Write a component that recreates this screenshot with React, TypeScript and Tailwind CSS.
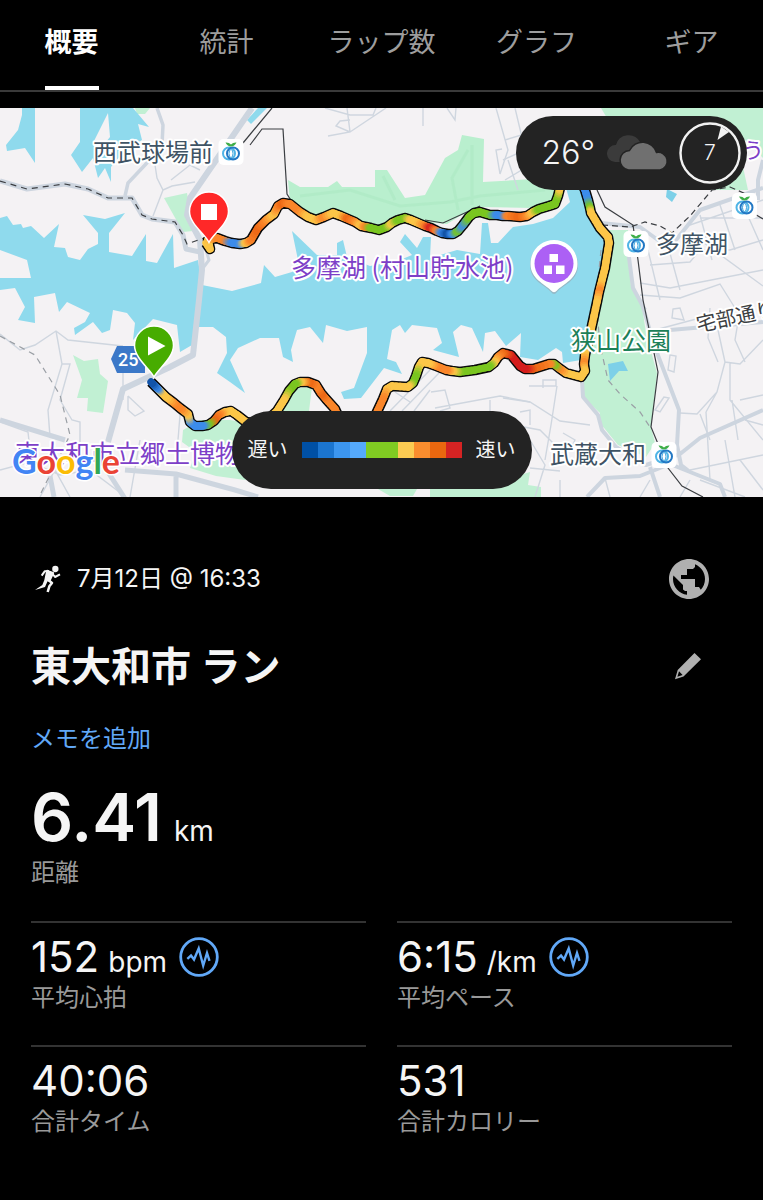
import { type ReactNode } from "react";

type RGB = [number, number, number];

const NAVY: RGB = [12, 76, 160];
const BLUE: RGB = [60, 140, 235];
const GREEN: RGB = [122, 198, 32];
const YELLOW: RGB = [252, 198, 72];
const ORANGE: RGB = [250, 134, 42];
const DEEP: RGB = [236, 102, 20];
const RED: RGB = [212, 28, 28];

type RoutePoint = [number, number, RGB];

const ROUTE: RoutePoint[] = [
  [206, 243, YELLOW], [210, 249, YELLOW], [208, 240, YELLOW], [217, 238, ORANGE], [225, 241, ORANGE],
  [232, 243, BLUE], [240, 244, BLUE], [246, 243, YELLOW], [251, 240, ORANGE], [258, 228, DEEP],
  [266, 220, ORANGE], [274, 214, YELLOW], [278, 206, ORANGE], [283, 203, DEEP], [290, 204, ORANGE],
  [300, 212, ORANGE], [308, 217, YELLOW], [316, 220, YELLOW], [324, 217, ORANGE], [333, 213, YELLOW],
  [341, 216, YELLOW], [348, 219, DEEP], [355, 222, ORANGE], [361, 226, YELLOW], [366, 227, ORANGE],
  [371, 228, GREEN], [379, 230, GREEN], [387, 227, GREEN], [392, 223, YELLOW], [398, 220, GREEN],
  [405, 218, GREEN], [411, 220, YELLOW], [418, 223, YELLOW], [425, 226, ORANGE], [431, 228, RED],
  [437, 231, ORANGE], [442, 233, BLUE], [448, 234, NAVY], [453, 234, BLUE], [458, 231, GREEN],
  [463, 225, BLUE], [469, 217, GREEN], [474, 213, GREEN], [480, 212, GREEN], [490, 215, GREEN],
  [497, 215, BLUE], [503, 216, BLUE], [508, 216, ORANGE], [520, 217, DEEP], [527, 216, ORANGE],
  [533, 212, YELLOW], [539, 209, GREEN], [549, 206, GREEN], [555, 204, GREEN], [558, 196, GREEN],
  [560, 188, YELLOW], [566, 174, YELLOW], [576, 172, BLUE], [585, 190, BLUE], [588, 200, BLUE],
  [590, 208, GREEN], [591, 213, YELLOW], [600, 228, YELLOW], [608, 237, YELLOW], [609, 243, YELLOW],
  [605, 268, YELLOW], [601, 284, YELLOW], [599, 292, ORANGE], [597, 302, YELLOW], [591, 330, YELLOW],
  [585, 355, YELLOW], [584, 364, ORANGE], [585, 371, YELLOW], [581, 377, YELLOW], [566, 373, YELLOW],
  [559, 368, ORANGE], [554, 364, GREEN], [549, 364, ORANGE], [533, 369, DEEP], [525, 369, RED],
  [520, 366, RED], [511, 355, RED], [503, 353, DEEP], [498, 357, ORANGE], [494, 363, YELLOW],
  [489, 367, GREEN], [475, 370, GREEN], [460, 372, GREEN], [452, 371, YELLOW], [446, 370, ORANGE],
  [436, 366, ORANGE], [428, 363, YELLOW], [422, 362, YELLOW], [419, 367, YELLOW], [416, 376, GREEN],
  [413, 383, GREEN], [408, 387, YELLOW], [392, 386, YELLOW], [387, 389, YELLOW], [383, 399, ORANGE],
  [376, 414, ORANGE], [360, 428, ORANGE], [342, 424, ORANGE], [335, 409, ORANGE], [326, 399, ORANGE],
  [321, 393, DEEP], [316, 385, ORANGE], [308, 382, DEEP], [300, 382, YELLOW], [295, 384, GREEN],
  [289, 391, GREEN], [284, 400, YELLOW], [277, 411, YELLOW], [263, 424, YELLOW], [246, 422, YELLOW],
  [237, 415, YELLOW], [231, 411, YELLOW], [225, 412, YELLOW], [219, 415, ORANGE], [214, 421, DEEP],
  [208, 425, GREEN], [202, 426, BLUE], [195, 426, BLUE], [190, 422, BLUE], [188, 414, YELLOW],
  [180, 408, ORANGE], [174, 403, ORANGE], [166, 397, YELLOW], [161, 392, YELLOW], [157, 388, BLUE],
  [151, 382, NAVY],
];

const STEPS = 4;

function mix(a: number, b: number, t: number) {
  return a + (b - a) * t;
}

function Route() {
  const points = ROUTE.map(([x, y]) => `${x},${y}`).join(" ");
  const pieces: ReactNode[] = [];
  for (let i = 0; i < ROUTE.length - 1; i++) {
    const [x1, y1, c1] = ROUTE[i];
    const [x2, y2, c2] = ROUTE[i + 1];
    for (let s = 0; s < STEPS; s++) {
      const t = s / STEPS;
      const u = (s + 1) / STEPS;
      const m = (t + u) / 2;
      const color = c1.map((v, k) => Math.round(mix(v, c2[k], m))).join(",");
      pieces.push(
        <line
          key={`${i}-${s}`}
          x1={mix(x1, x2, t)}
          y1={mix(y1, y2, t)}
          x2={mix(x1, x2, u)}
          y2={mix(y1, y2, u)}
          stroke={`rgb(${color})`}
        />
      );
    }
  }
  return (
    <g fill="none" strokeLinejoin="round">
      <polyline points={points} stroke="#0a0a0a" strokeWidth="10.5" />
      <g strokeWidth="7.4" strokeLinecap="round">{pieces}</g>
    </g>
  );
}

function Station({ x, y }: { x: number; y: number }) {
  return (
    <g transform={`translate(${x} ${y})`} fill="none">
      <rect x="-12.5" y="-13" width="25" height="26" rx="5" fill="#fff" />
      <circle cx="-2" cy="1.5" r="6" stroke="#4fb4e6" strokeWidth="2" />
      <circle cx="2" cy="1.5" r="6" stroke="#2278c4" strokeWidth="2" />
      <ellipse cx="0" cy="1.5" rx="2" ry="4" stroke="#35a0dc" strokeWidth="1" />
      <path d="M-5.5-9.5Q-2-9.8 0-7.4Q2-9.8 5.5-9.5Q3.500-5.500 0-5.500Q-3.500-5.500-5.500-9.500Z" fill="#3fae49" />
    </g>
  );
}

function MapDrawing() {
  return (
    <svg viewBox="0 108 763 389" className="block h-auto w-full" role="img" aria-label="ルートマップ">
      <rect x="0" y="108" width="763" height="389" fill="#f4f2f4" />

      {/* parks and woods */}
      <g fill="#c1f0d3">
        <path d="M288 180L300 187H328L337 181L342 187H375V170H387L405 198L425 195L445 158L458 150L462 135L484 139L483 182L550 178L558 196L551 201L533 208L480 207L460 216L447 224L425 222L405 214L380 226L360 222L335 210L315 216L300 208L290 202Z" fill="#b9efce" />
        <path d="M601 108H763V158L735 130L748 190H700L620 140Z" />
        <path d="M593 233L603 230H628L631 287L641 300L646 333L657 373L651 427L655 443L646 457L618 445L600 423V413L583 397L582 380L591 350L601 300L610 243Z" />
        <path d="M164 198L187 193L193 231L183 232Z" />
        <path d="M73 355L84 361L98 359L100 374L108 381L103 413L87 411L88 398L77 398L82 380Z" />
        <path d="M183 430L200 420L230 420L260 425L260 470L245 480L216 476L190 468L196 452L182 442Z" />
        <path d="M296 388L312 387L309 411H282Z" />
        <path d="M378 489H417L413 496L390 496ZM430 489L503 480L530 472L528 485L541 487V497H430Z" />
        <path d="M135 108H150L145 114H137Z" />
      </g>
      <g fill="none" stroke="#aeeac5" strokeWidth="3" opacity=".7">
        <path d="M300 196L350 190L400 206L450 202L480 196L545 190M383 176L395 200M468 150L452 178L458 210M472 145V205" />
      </g>

      {/* water */}
      <g fill="#8fdaed">
        <path d="M0 218L7 216L13 225L21 224L23 228L31 226L44 238L59 224L54 247L65 248L68 257L80 260L88 249L98 244V233L83 215L105 219L125 213L109 233V252L132 256L146 234V261L157 263L173 234L174 268L198 260L202 285L232 291L261 283L264 265L275 277L292 272L298 260L292 231L317 255H337V243L343 240L347 257L370 266L400 260L412 255L400 242L405 234L417 248L423 237H431L430 258L457 250L480 254L482 223H488L491 243H498L510 230L513 227L533 224L553 218L570 202L566 188H586L593 218L608 240L601 280L586 350L581 360L563 363L562 352L556 348L538 360L520 357L521 333L506 346L495 331L485 333L483 352L472 328L461 325L453 332L459 357L433 350L442 343L437 328L412 325L405 333L400 325L392 330L387 359L396 362L402 374L384 368L361 398L344 399L341 392L354 388L367 353V327L347 331L326 325L323 343L310 327L297 330L291 350L293 362L283 357L279 338H260L238 348L230 360L245 393L230 382L217 373L227 353L226 337L213 327H198L192 345L180 352L177 325L153 319L133 340L135 323L127 313L113 310L110 330L102 333L93 322L75 335L74 328L85 322L90 313L67 302L59 312L55 293L34 297L35 323L18 320L25 307L15 288L0 290V278H31L27 260L0 250Z" />
        <path d="M11 108H22V115L18 130L6 145L7 151L25 148L35 163V108Z" />
        <path d="M80 108H133L149 127L138 124L142 140L125 150L111 167V182L105 168L98 178L93 158L82 172L71 155L80 142Z" />
        <path d="M247 120L258 108H267L251 124Z" />
        <path d="M667 189L677 194L672 202L666 197ZM608 364L623 361L628 371L619 371L610 381Z" fill="#7dd0e8" />
      </g>
      <path d="M108 113L110 137L97 153L93 143Z" fill="#f4f2f4" />

      {/* minor streets */}
      <g fill="none" stroke="#cfd6df" strokeWidth="1.4">
        <path d="M155 165L157 178L163 190L172 186L195 182M163 190L153 216M171 180L190 165L200 170" />
        <path d="M0 334L20 350L35 345L56 331L68 340L123 346M56 331L62 364L48 410L50 437M62 364L70 364L60 400L72 420L80 422V470M0 422L28 432L30 450M0 470L30 462L60 475L90 470L130 500M40 497L55 470L70 497M128 396L144 411L135 416L128 410V396M165 390L180 415L178 440M123 371L123 400M140 440L130 497" />
        <path d="M325 108L350 115H373L376 108M347 108L350 132L328 136M350 132L336 126L340 121L350 120M350 132L386 108M423 108V126M447 108L455 120L456 108M496 108L508 150L500 174L496 150L502 149" />
        <path d="M505 140L545 128M515 108L525 150L503 160M505 180L530 165L540 178M508 160L518 190" />
        <path d="M390 411L430 370M402 411L440 372M414 411L430 390M395 392L410 402M431 392L445 390L450 408L440 411M435 408L500 396L530 402M490 400V411" />
        <path d="M503 398L530 402L560 421L590 425M529 386H556V380H543V388M557 386L551 425L545 460M503 423L540 430L560 450M520 412L530 410V425M563 433L575 440L570 450M560 480V497M530 440L545 465L535 497M530 468L560 471" />
        <path d="M640 283L670 288L763 270M648 250L660 300M650 265L690 262L700 250H730L763 240M668 246L680 290M690 225L763 200M700 215L712 260M720 205L735 250M740 198L763 250M700 218L763 218M640 295L680 298L720 284L735 308M700 240L763 286" />
        <path d="M673 309L680 308L684 320L672 318ZM710 308L708 338L718 362M718 330L725 362L740 364L763 340M740 310L735 340L745 362M655 330L700 318M725 362L717 392L697 414L680 413M717 392L706 412M730 362V400L763 440M706 412L710 480M732 400L738 440M740 400L763 395M670 355L676 356L674 372L668 370ZM664 397L655 410L660 412L669 398Z" />
        <path d="M700 414L710 440M690 470L763 455M690 480L680 497M725 440L735 497M700 480L745 497M740 460L763 490M745 420L763 425M650 480L640 497M605 478L610 497" />
      </g>
      {/* main roads */}
      <g fill="none" stroke="#cdd5df" strokeWidth="5" strokeLinejoin="round">
        <path d="M157 108L163 125L162 145L145 165L128 183L125 196" strokeWidth="3.500" />
        <path d="M0 181L27 189L65 184L88 189L108 198L132 198L142 215L152 219L175 222L183 235L186 249L200 252" />
        <path d="M252 108L190 198L187 215L200 240L202 270L199 300L193 355L168 368L123 389L108 442" strokeWidth="6" />
        <path d="M206 250L209 260L203 268" strokeWidth="3" />
        <path d="M0 420L65 440M125 470L176 474L235 490L258 497M176 474V497M108 472L124 497M54 497L50 476" />
        <path d="M582 380L583 397L598 415L602 430L616 447L646 465L680 454L700 438L763 410M587 497L605 478L640 476L670 464L690 472L720 484L725 497M641 300L654 345L679 410L677 445L681 465L690 472M650 467L660 497" strokeWidth="4" />
        <path d="M601 223L640 227L658 240L672 245L700 210L763 188M643 232L628 250L633 288L645 310M763 160L758 180V200M670 330L763 322" strokeWidth="4" />
      </g>
      {/* railways */}
      <g fill="none" stroke="#3b3e42" strokeWidth="1.2">
        <path d="M243 143L272 108M250 145L262 129H283L287 194L292 202M425 220L443 223L480 206M597 190L605 207L633 225L638 260L643 300L658 372L651 427L668 468L682 486L703 497M753 213L763 219" />
        <path d="M0 181L27 189L65 184L88 189L108 198L132 198L142 215L152 219L175 222L183 235L187 244L204 238" strokeDasharray="6 5" />
        <path d="M602 225L630 227L645 222L660 226L672 233L690 216L712 190L730 187L755 198" strokeDasharray="6 4" />
        <path d="M601 250L596 300L600 345L608 380L620 394L640 412L650 427M0 336L35 355L60 395L70 435L40 495" stroke="#9a9fa5" strokeDasharray="6 5" />
      </g>

      <Route />

      {/* place labels */}
      <g
        fontFamily='"Noto Sans CJK JP", sans-serif'
        fontSize="24"
        fontWeight="400"
        stroke="#fff"
        strokeWidth="4"
        strokeLinejoin="round"
        paintOrder="stroke"
      >
        <text x="93" y="161" fontSize="24" fill="#3f5364">西武球場前</text>
        <text x="656" y="253" fontSize="24" fill="#3f5364">多摩湖</text>
        <text x="550" y="463" fontSize="24" fill="#3f5364">武蔵大和</text>
        <text x="291" y="277" fontSize="25" fill="#7d3fc8">多摩湖 (村山貯水池)</text>
        <text x="571" y="350" fontSize="25" fill="#1c8058">狭山公園</text>
        <text x="15" y="463" fontSize="25" fill="#7d3fc8">東大和市立郷土博物</text>
        <text x="742" y="158" fontSize="22" fill="#7d3fc8">うぇ</text>
        <text x="698" y="332" fontSize="20" fill="#3c4043" transform="rotate(-12 698 332)">宅部通り</text>
      </g>

      <Station x={231} y={152} />
      <Station x={744.500} y={206} />
      <Station x={636} y={244} />
      <Station x={664} y={455} />

      {/* lake marker */}
      <path d="M554 241C541 241 530 251 530 265C530 281 545 285 551 292Q554 296 557 292C563 285 578 281 578 265C578 251 567 241 554 241Z" fill="#9aa3ad" opacity=".6" />
      <path d="M554 240C541 240 530.500 250 530.500 264C530.500 279 545 284 551 290.500Q554 294 557 290.500C563 284 577.500 279 577.500 264C577.500 250 567 240 554 240Z" fill="#fff" />
      <circle cx="554" cy="263.500" r="19.500" fill="#ac60f5" />
      <path d="M549.500 254H558V262H549.500ZM544 265.500H552V274H544ZM556 265.500H564.500V274H556Z" fill="#fff" />

      {/* route number shield */}
      <path d="M117 346H145V373H117L111 359Z" fill="#3b78c8" />
      <text x="118" y="366" fontFamily="Roboto, sans-serif" fontSize="18" fontWeight="500" fill="#fff">25</text>

      {/* start and finish pins */}
      <path d="M154 377C150 369 134.500 358 134.500 345.500A19.500 19.500 0 0 1 173.500 345.500C173.500 358 158 369 154 377Z" fill="#47ac00" stroke="#fff" strokeWidth="1.5" />
      <path d="M148 336.500L165.500 346L148 355.500Z" fill="#fff" />
      <path d="M209 242.500C205 234 189.500 224 189.500 211.500A19.500 19.500 0 0 1 228.500 211.500C228.500 224 213 234 209 242.500Z" fill="#ff2828" stroke="#fff" strokeWidth="1.5" />
      <rect x="201" y="204" width="16" height="16" fill="#fff" />

      <text
        x="12"
        y="474"
        fontFamily="Lato, sans-serif"
        fontSize="34"
        fontWeight="700"
        stroke="#fff"
        strokeWidth="3"
        strokeLinejoin="round"
        paintOrder="stroke"
      >
        <tspan fill="#4285f4">G</tspan>
        <tspan fill="#ea4335">o</tspan>
        <tspan fill="#fbbc05">o</tspan>
        <tspan fill="#4285f4">g</tspan>
        <tspan fill="#34a853">l</tspan>
        <tspan fill="#ea4335">e</tspan>
      </text>
    </svg>
  );
}

function WeatherPill() {
  return (
    <div className="absolute top-2 right-4 flex h-[74px] items-center rounded-full bg-[#232323] pr-1.5 pl-[26px]">
      <span className="text-[32px] leading-10 font-light">26°</span>
      <svg viewBox="0 0 62 36" className="ml-3 h-9 w-[62px]" role="img" aria-label="曇り">
        <path d="M8 27A8.500 8.500 0 0 1 9 10A13 13 0 0 1 33 7L31 27Z" fill="#3b3b3b" />
        <path d="M21.500 35A9.800 9.800 0 0 1 22.500 15.500A14.500 14.500 0 0 1 49.500 17.500A8.800 8.800 0 1 1 53 35Z" fill="#707070" stroke="#232323" strokeWidth="1.5" />
      </svg>
      <span className="relative ml-2.5 flex size-[62px] items-center justify-center text-[21px] leading-6 font-light">
        <svg viewBox="0 0 62 62" className="absolute inset-0 size-full" aria-hidden="true">
          <circle cx="31" cy="31" r="29.500" fill="none" stroke="#f2f2f2" strokeWidth="2.400" />
          <path d="M38.500 18L42 4.500L50 10Z" fill="#f2f2f2" />
        </svg>
        7
      </span>
    </div>
  );
}

function PaceLegend() {
  return (
    <div className="absolute bottom-2 left-1/2 flex h-[78px] -translate-x-1/2 items-center gap-3.5 rounded-full bg-[#232323] px-4 text-xl leading-6 whitespace-nowrap">
      <span>遅い</span>
      <div className="flex h-4 w-40">
        <span className="w-4 bg-[#0050a5]" />
        <span className="w-4 bg-[#1b75d0]" />
        <span className="w-4 bg-[#3c96f0]" />
        <span className="w-4 bg-[#55a9fb]" />
        <span className="w-8 bg-[#80cb22]" />
        <span className="w-4 bg-[#fbcb52]" />
        <span className="w-4 bg-[#fa8d2e]" />
        <span className="w-4 bg-[#ea670f]" />
        <span className="w-4 bg-[#d52323]" />
      </div>
      <span>速い</span>
    </div>
  );
}

function RunnerIcon() {
  return (
    <svg viewBox="104 74 78 84" className="h-7 w-[26px]" fill="none" stroke="#f5f5f5" strokeLinejoin="round" aria-hidden="true">
      <circle cx="165" cy="86" r="9.500" fill="#f5f5f5" stroke="none" />
      <path d="M141 92L158 98L147 121L136 117Z" fill="#f5f5f5" strokeWidth="7" />
      <path d="M146 92L133 93L124 106M157 101L164 110L179 102" strokeWidth="6" />
      <path d="M142 117L155 128L147 138L142 155" strokeWidth="7.500" />
      <path d="M104 149L126 134L133 117L142 122L134 140Z" fill="#f5f5f5" stroke="none" />
    </svg>
  );
}

function GlobeIcon() {
  return (
    <svg viewBox="0 0 24 24" className="size-12" fill="#b0b0b0" aria-hidden="true">
      <path d="M12 2C6.480 2 2 6.480 2 12s4.480 10 10 10 10-4.480 10-10S17.520 2 12 2zm-1 17.930c-3.950-.49-7-3.850-7-7.930 0-.62.08-1.210.21-1.790L9 15v2.200l1 .8h1v1.930zm6.900-2.540L17 16h-2v-4H8v-2h3V7h3l1-1V4.590c2.930 1.190 5 4.060 5 7.410 0 2.080-.8 3.970-2.100 5.390z" />
    </svg>
  );
}

function PencilIcon() {
  return (
    <svg viewBox="0 0 28 28" className="size-7" fill="#b0b0b0" aria-hidden="true">
      <path fillRule="evenodd" d="M20.500 0L27 6.300L9.500 23.500L1 26.300L3.700 17ZM5 18.200L3.400 23.800L8.600 22Z" />
    </svg>
  );
}

function PulseButton({ label }: { label: string }) {
  return (
    <button type="button" aria-label={label} className="size-10">
      <svg viewBox="0 0 40 40" className="size-10" fill="none" stroke="#61a8f7" aria-hidden="true">
        <circle cx="20" cy="20" r="18.300" strokeWidth="2.800" />
        <path d="M8.300 21.800L12 18.500L15 22.500L19.700 11.500L24.200 28.500L28 16L30.500 23.800" strokeWidth="2.400" strokeLinejoin="miter" strokeMiterlimit="10" />
      </svg>
    </button>
  );
}

type StatProps = { value: string; unit?: string; label: string; pulse?: boolean };

function Stat({ value, unit, label, pulse }: StatProps) {
  return (
    <div className="flex flex-col border-t-2 border-[#333] pt-2.5">
      <dt className="order-2 mt-px text-2xl leading-8 text-[#999]">{label}</dt>
      <dd className="flex h-12 items-center gap-3">
        <span className="flex items-baseline gap-[9px]">
          <span className="text-[42px] leading-[48px]">{value}</span>
          {unit && <span className="text-[28px] leading-none">{unit}</span>}
        </span>
        {pulse && <PulseButton label={`${label}のグラフ`} />}
      </dd>
    </div>
  );
}

const TABS = ["概要", "統計", "ラップ数", "グラフ", "ギア"];

export default function App() {
  return (
    <div className="min-h-screen overflow-x-hidden bg-black font-['Inter','Noto_Sans_CJK_JP',sans-serif] text-[#f5f5f5]" lang="ja">
      <header className="border-b-2 border-[#3a3a3a]">
        <nav className="-mx-1.5 grid grid-cols-5">
          {TABS.map((tab, i) => (
            <a
              key={tab}
              href={`#${tab}`}
              aria-current={i === 0 ? "page" : undefined}
              className={
                i === 0
                  ? "justify-self-center border-b-4 border-white py-[22px] text-[27px] leading-[42px] font-bold whitespace-nowrap text-white"
                  : "justify-self-center border-b-4 border-transparent py-[22px] text-[27px] leading-[42px] whitespace-nowrap text-[#9d9d9d]"
              }
            >
              {tab}
            </a>
          ))}
        </nav>
      </header>

      <main>
        <section className="relative mt-4">
          <MapDrawing />
          <WeatherPill />
          <PaceLegend />
        </section>

        <section className="px-[31px] pt-[58px] pb-14">
          <div className="flex items-center justify-between">
            <p className="flex items-center gap-4 pl-1 text-2xl leading-8">
              <RunnerIcon />
              <span>7月12日 @ 16:33</span>
            </p>
            <button type="button" aria-label="公開設定" className="mr-[19px]">
              <GlobeIcon />
            </button>
          </div>

          <div className="mt-10 flex items-center justify-between">
            <h1 className="text-[40px] leading-[48px] font-bold">東大和市 ラン</h1>
            <button type="button" aria-label="名前を編集" className="mr-[30px]">
              <PencilIcon />
            </button>
          </div>

          <a href="#memo" className="mt-8 block text-2xl leading-8 text-[#61a8f7]">
            メモを追加
          </a>

          <dl>
            <div className="mt-[26px] flex flex-col">
              <dt className="order-2 mt-1 text-2xl leading-8 text-[#999]">距離</dt>
              <dd className="flex items-baseline gap-3">
                <span className="text-[66px] leading-[72px] font-semibold">6.41</span>
                <span className="text-[28px] leading-none">km</span>
              </dd>
            </div>
            <div className="mt-8 grid grid-cols-2 gap-[31px]">
              <Stat value="152" unit="bpm" label="平均心拍" pulse />
              <Stat value="6:15" unit="/km" label="平均ペース" pulse />
              <Stat value="40:06" label="合計タイム" />
              <Stat value="531" label="合計カロリー" />
            </div>
          </dl>
        </section>
      </main>
    </div>
  );
}
